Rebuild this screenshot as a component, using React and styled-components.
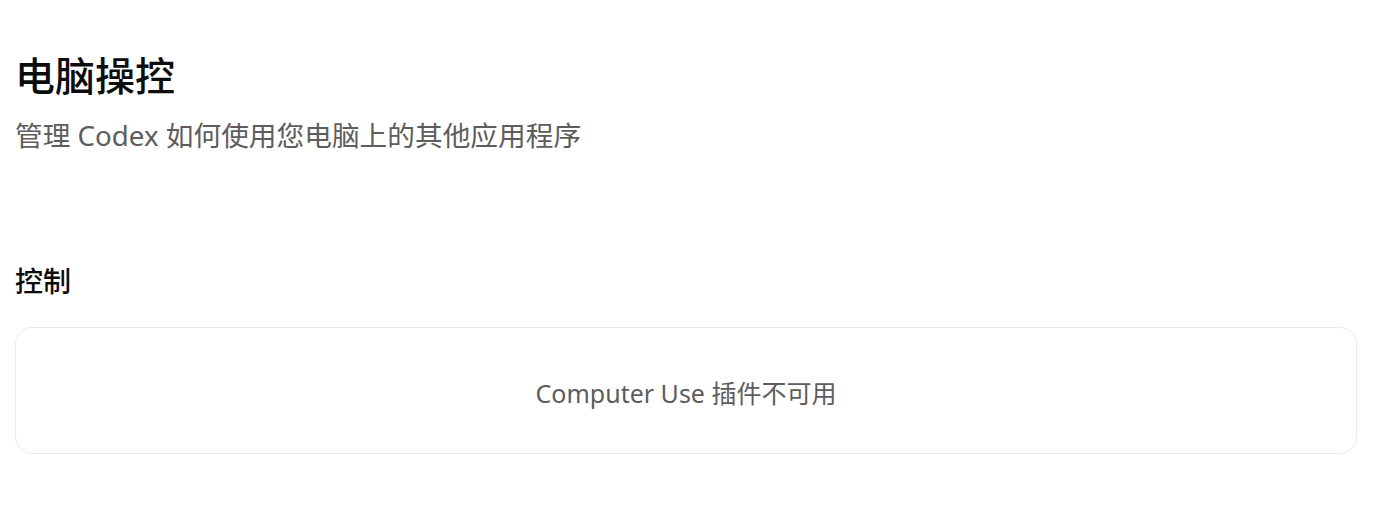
import React from "react";
import styled, { createGlobalStyle } from "styled-components";

const Global = createGlobalStyle`
  html, body { margin: 0; padding: 0; background: #ffffff; }
  body { font-family: "Noto Sans", "Noto Sans CJK SC", sans-serif; }
`;

const Page = styled.main`
  padding: 50px 16px 0 15px;
  display: flex;
  flex-direction: column;
`;

const Header = styled.header`
  display: flex;
  flex-direction: column;
  gap: 14px;
`;

const Title = styled.h1`
  margin: 0;
  font-size: 40px;
  line-height: 52px;
  font-weight: 500;
  color: #0d0d0d;
`;

const Subtitle = styled.p`
  margin: 0;
  font-size: 27.7px;
  line-height: 38px;
  font-weight: 400;
  color: #5d5d5d;
`;

const Section = styled.section`
  margin-top: 108px;
  display: flex;
  flex-direction: column;
  gap: 27px;
`;

const SectionTitle = styled.h2`
  margin: 0;
  font-size: 28px;
  line-height: 38px;
  font-weight: 500;
  color: #0d0d0d;
`;

const Card = styled.div`
  box-sizing: border-box;
  height: 127px;
  padding-top: 4px;
  border: 1.5px solid #ebebeb;
  border-radius: 17px;
  display: flex;
  align-items: center;
  justify-content: center;
`;

const EmptyText = styled.span`
  font-size: 25px;
  line-height: 34px;
  color: #5d5d5d;
`;

export default function App() {
  return (
    <>
      <Global />
      <Page>
        <Header>
          <Title>电脑操控</Title>
          <Subtitle>管理 Codex 如何使用您电脑上的其他应用程序</Subtitle>
        </Header>
        <Section>
          <SectionTitle>控制</SectionTitle>
          <Card>
            <EmptyText>Computer Use 插件不可用</EmptyText>
          </Card>
        </Section>
      </Page>
    </>
  );
}
